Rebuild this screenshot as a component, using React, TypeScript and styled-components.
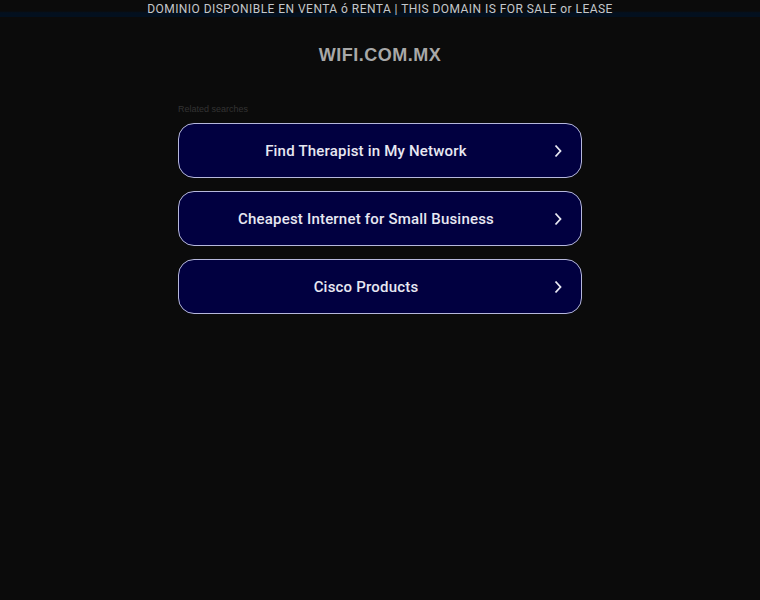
import React from "react";
import styled, { createGlobalStyle } from "styled-components";

const Global = createGlobalStyle`
  html, body { margin: 0; padding: 0; background: #0b0b0b; }
  body { font-family: "Liberation Sans", Arial, sans-serif; }
`;

const Page = styled.div`
  min-height: 600px;
  background: #0b0b0b;
  display: flex;
  flex-direction: column;
  align-items: center;
`;

const TopBar = styled.div`
  width: 100%;
  height: 17px;
  background: linear-gradient(to bottom, #0b0b0b 0%, #0b0b0b 65%, #03101f 75%, #03101f 100%);
  display: flex;
  justify-content: center;
  align-items: flex-start;
`;

const TopText = styled.div`
  font-family: Roboto, "Liberation Sans", sans-serif;
  color: #c4c8cc;
  font-size: 12px;
  letter-spacing: 0.45px;
  line-height: 16px;
  padding-top: 1px;
`;

const Domain = styled.h1`
  margin: 27px 0 0;
  color: #a8a8a8;
  font-size: 18px;
  font-weight: bold;
  letter-spacing: 0.5px;
  line-height: 22px;
`;

const Content = styled.div`
  width: 404px;
  margin-top: 38px;
  display: flex;
  flex-direction: column;
`;

const Label = styled.div`
  color: #333;
  font-size: 9px;
  line-height: 11px;
  margin-bottom: 8px;
`;

const List = styled.div`
  display: flex;
  flex-direction: column;
  gap: 13px;
`;

const Item = styled.a`
  box-sizing: border-box;
  height: 55px;
  border: 1px solid #b6b8dc;
  border-radius: 16px;
  background: #010040;
  display: flex;
  align-items: center;
  padding-right: 28px;
  position: relative;
  text-decoration: none;
`;

const ItemText = styled.span`
  flex: 1;
  text-align: center;
  font-family: Roboto, "Liberation Sans", sans-serif;
  color: #e8e8f2;
  font-size: 15px;
  font-weight: 500;
  letter-spacing: 0.2px;
`;

const Chevron = styled.svg`
  position: absolute;
  right: 16px;
  top: 50%;
  margin-top: -7px;
`;

const items = [
  "Find Therapist in My Network",
  "Cheapest Internet for Small Business",
  "Cisco Products",
];

export default function App() {
  return (
    <>
      <Global />
      <Page>
        <TopBar>
          <TopText>DOMINIO DISPONIBLE EN VENTA ó RENTA | THIS DOMAIN IS FOR SALE or LEASE</TopText>
        </TopBar>
        <Domain>WIFI.COM.MX</Domain>
        <Content>
          <Label>Related searches</Label>
          <List>
            {items.map((t) => (
              <Item key={t} href="#">
                <ItemText>{t}</ItemText>
                <Chevron width="14" height="14" viewBox="0 0 14 14">
                  <path d="M4.5 1.5 L9.5 7 L4.5 12.5" fill="none" stroke="#e8e8f2" strokeWidth="1.8" />
                </Chevron>
              </Item>
            ))}
          </List>
        </Content>
      </Page>
    </>
  );
}
